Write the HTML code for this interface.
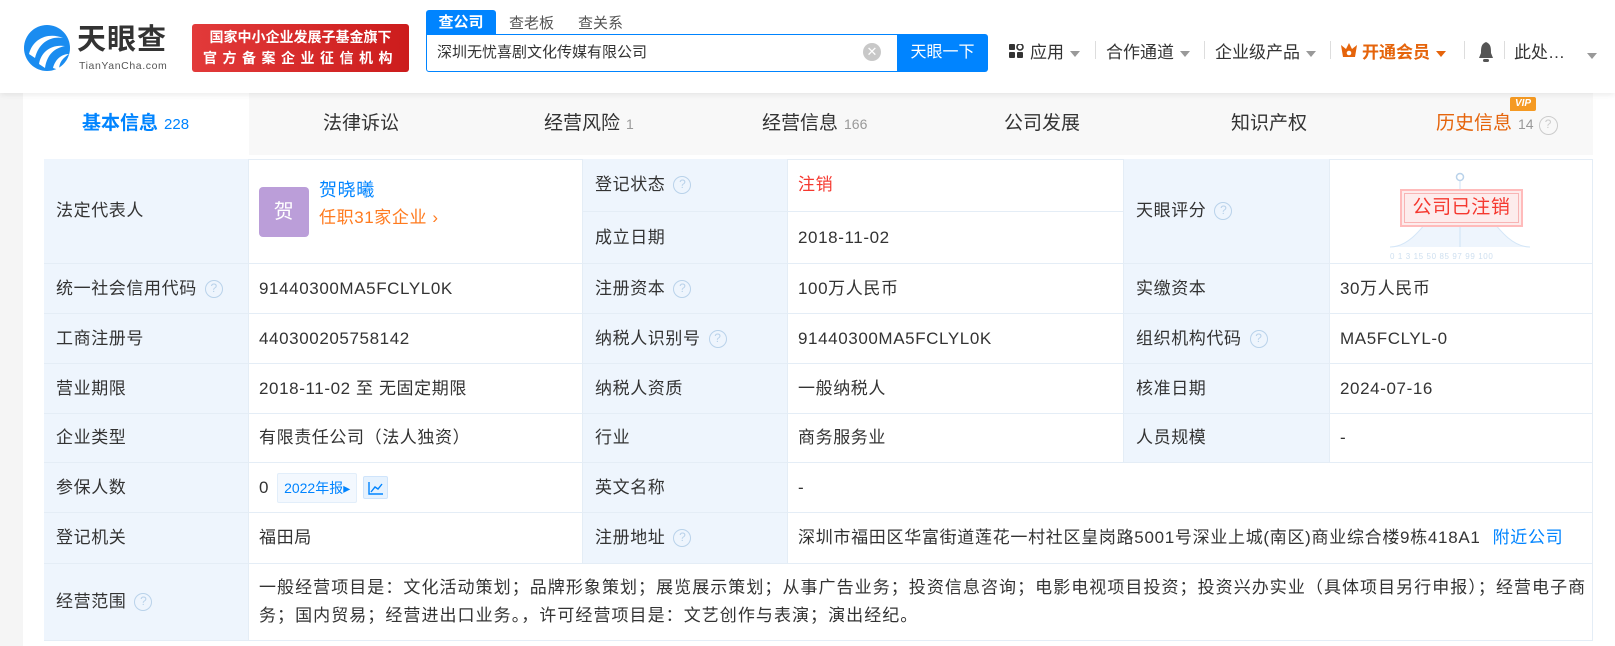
<!DOCTYPE html>
<html><head><meta charset="utf-8">
<style>
*{margin:0;padding:0;box-sizing:border-box}
body{width:1615px;height:646px;overflow:hidden;background:#fff;font-family:"Liberation Sans","Noto Sans CJK SC",sans-serif;color:#333;position:relative}
.a{position:absolute;white-space:nowrap}
.hdr{position:absolute;left:0;top:0;width:1615px;height:93px;background:#fff;box-shadow:0 2px 6px rgba(0,0,0,.08);z-index:3}
.nav{font-size:17px;color:#333;top:38px}
.tri{display:inline-block;width:0;height:0;border-left:5px solid transparent;border-right:5px solid transparent;border-top:6px solid #999;vertical-align:middle;margin-left:6px}
.sep{position:absolute;top:41px;width:1px;height:18px;background:#ddd}
.tabbar{position:absolute;left:23px;top:93px;width:1570px;height:62px;background:#f8f8f8}
.tab{position:absolute;top:108px;font-size:19px;color:#333}
.tab small{font-size:14px;color:#999;margin-left:6px}
.cell{position:absolute;border-right:1px solid #e4edf6;border-bottom:1px solid #e4edf6;font-size:17px;letter-spacing:.6px;line-height:22px;color:#333;display:flex;align-items:center;padding-left:12px;white-space:nowrap}
.lb{background:#eef5fd}
.vl{padding-left:10px}
.q{display:inline-block;width:18px;height:18px;border:1.5px solid #b9d2ea;border-radius:50%;color:#b9d2ea;font-size:12px;text-align:center;line-height:15px;margin-left:8px;letter-spacing:0}
</style></head><body>
<div style="position:absolute;left:0;top:93px;width:23px;height:553px;background:#f5f5f5"></div>
<div class="hdr">
 <svg class="a" style="left:23px;top:24px" width="48" height="48" viewBox="0 0 48 48">
  <circle cx="24" cy="24" r="23" fill="#1a8cf0"/>
  <path d="M6 30 C10 14 26 8 40 14 C28 12 16 18 12 34 Z" fill="#fff"/>
  <path d="M16 40 C18 28 28 20 42 22 C32 24 24 30 22 44 Z" fill="#fff"/>
  <path d="M30 44 C32 36 38 30 46 30 C40 34 36 38 36 46 Z" fill="#fff"/>
 </svg>
 <div class="a" style="left:77px;top:22px;font-size:29px;line-height:36px;font-weight:bold;color:#333;letter-spacing:1px">天眼查</div>
 <div class="a" style="left:79px;top:60px;font-size:10.5px;line-height:12px;color:#555;letter-spacing:.6px">TianYanCha.com</div>
 <div class="a" style="left:192px;top:24px;width:217px;height:48px;background:linear-gradient(90deg,#e23a3a,#cc1c1c);border-radius:3px;color:#fff;font-size:14px;text-align:center;line-height:21px;padding-top:3px;font-weight:bold">国家中小企业发展子基金旗下<br><span style="letter-spacing:5.5px">官方备案企业征信机构</span></div>
 <div class="a" style="left:426px;top:10px;width:70px;height:25px;background:#0084ff;color:#fff;font-size:15px;font-weight:bold;text-align:center;line-height:25px;border-radius:3px 3px 0 0">查公司</div>
 <div class="a" style="left:509px;top:12px;font-size:15px;color:#555">查老板</div>
 <div class="a" style="left:578px;top:12px;font-size:15px;color:#555">查关系</div>
 <div class="a" style="left:426px;top:34px;width:472px;height:38px;border:1px solid #0084ff;border-radius:0 0 0 3px;font-size:15px;line-height:35px;padding-left:10px;color:#333">深圳无忧喜剧文化传媒有限公司</div>
 <div class="a" style="left:863px;top:43px;width:18px;height:18px;border-radius:50%;background:#c8c8c8;color:#fff;font-size:13px;text-align:center;line-height:18px">✕</div>
 <div class="a" style="left:897px;top:34px;width:91px;height:38px;background:#0084ff;color:#fff;font-size:16px;text-align:center;line-height:38px;border-radius:0 3px 3px 0">天眼一下</div>
 <svg class="a" style="left:1009px;top:44px" width="15" height="15"><rect x="0" y="0" width="6" height="6" rx="1" fill="#333"/><rect x="8" y="0" width="6" height="6" rx="3" fill="none" stroke="#333" stroke-width="1.6"/><rect x="0" y="8" width="6" height="6" rx="1" fill="#333"/><rect x="8" y="8" width="6" height="6" rx="1" fill="#333"/></svg>
 <div class="a nav" style="left:1030px">应用<span class="tri"></span></div>
 <div class="sep" style="left:1095px"></div>
 <div class="a nav" style="left:1106px">合作通道<span class="tri"></span></div>
 <div class="sep" style="left:1204px"></div>
 <div class="a nav" style="left:1215px">企业级产品<span class="tri"></span></div>
 <div class="sep" style="left:1330px"></div>
 <svg class="a" style="left:1340px;top:42px" width="18" height="16"><path d="M1 3 L6 7 L9 1 L12 7 L17 3 L15 15 L3 15 Z" fill="#e5640b"/><circle cx="9" cy="11" r="2.3" fill="#fff"/></svg>
 <div class="a nav" style="left:1362px;color:#e5640b;font-weight:bold">开通会员<span class="tri" style="border-top-color:#e5640b"></span></div>
 <div class="sep" style="left:1464px"></div>
 <svg class="a" style="left:1477px;top:41px" width="18" height="22"><path d="M9 1 C4 3 4 7 4 12 L2 17 L16 17 L14 12 C14 7 14 3 9 1Z" fill="#555"/><rect x="6" y="18" width="6" height="3" rx="1.5" fill="#555"/></svg>
 <div class="sep" style="left:1504px"></div>
 <div class="a nav" style="left:1514px">此处…</div>
 <div class="a" style="left:1587px;top:47px"><span class="tri" style="margin:0"></span></div>
</div>
<div class="tabbar"></div>
<div class="a" style="left:23px;top:93px;width:226px;height:62px;background:#fff"></div>
<div class="tab" style="left:82px;color:#0084ff;font-weight:bold">基本信息<small style="color:#0084ff;font-weight:normal;font-size:15px">228</small></div>
<div class="tab" style="left:323px">法律诉讼</div>
<div class="tab" style="left:544px">经营风险<small>1</small></div>
<div class="tab" style="left:762px">经营信息<small>166</small></div>
<div class="tab" style="left:1004px">公司发展</div>
<div class="tab" style="left:1231px">知识产权</div>
<div class="tab" style="left:1436px;color:#e5640b">历史信息<small>14</small><span class="q" style="border-color:#ccc;color:#ccc;width:19px;height:19px;margin-left:5px;vertical-align:1px">?</span></div>
<div class="a" style="left:1510px;top:97px;width:26px;height:14px;background:#f59a23;color:#fff;font-size:10px;font-weight:bold;font-style:italic;text-align:center;line-height:14px;border-radius:2px 2px 2px 0">VIP</div>

<div class="a" style="left:44px;top:159px;width:1549px;height:482px;border-top:1px solid #e4edf6;border-left:1px solid #e4edf6"></div>
<div class="cell lb" style="left:44px;top:159px;width:205px;height:105px">法定代表人</div>
<div class="cell" style="left:249px;top:159px;width:334px;height:105px">
 <div class="a" style="left:10px;top:28px;width:50px;height:50px;background:#bb9ed9;border-radius:4px;color:#fff;font-size:20px;text-align:center;line-height:50px">贺</div>
 <div class="a" style="left:70px;top:20px;font-size:18px;color:#0084ff">贺晓曦</div>
 <div class="a" style="left:70px;top:48px;font-size:17px;color:#ff7a1e">任职31家企业 ›</div>
</div>
<div class="cell lb" style="left:583px;top:159px;width:205px;height:53px">登记状态<span class="q">?</span></div>
<div class="cell vl" style="left:788px;top:159px;width:336px;height:53px;color:#f5382f">注销</div>
<div class="cell lb" style="left:583px;top:212px;width:205px;height:52px">成立日期</div>
<div class="cell vl" style="left:788px;top:212px;width:336px;height:52px">2018-11-02</div>
<div class="cell lb" style="left:1124px;top:159px;width:206px;height:105px">天眼评分<span class="q">?</span></div>
<div class="cell" style="left:1330px;top:159px;width:263px;height:105px">
 <svg class="a" style="left:60px;top:10px" width="140" height="90" viewBox="0 0 140 90">
  <path d="M0 78 C30 78 45 30 70 22 C95 30 110 78 140 78" fill="#eef5fd" stroke="#d4e6f7"/>
  <line x1="70" y1="12" x2="70" y2="78" stroke="#cfe2f5"/>
  <circle cx="70" cy="8" r="3.5" fill="none" stroke="#b9d2ea" stroke-width="1.5"/>
  <text x="0" y="90" font-size="8" fill="#cfe0f0" font-family="Liberation Sans">0   1    3   15   50   85   97   99  100</text>
 </svg>
 <div class="a" style="left:70px;top:30px;width:123px;height:38px;background:#fdecec;border:2px solid #fbb;padding:2px"><div style="border:1px solid #f8b4b4;height:100%;color:#f5382f;font-size:19px;text-align:center;line-height:28px">公司已注销</div></div>
</div>
<div class="cell lb" style="left:44px;top:264px;width:205px;height:50px">统一社会信用代码<span class="q">?</span></div>
<div class="cell vl" style="left:249px;top:264px;width:334px;height:50px">91440300MA5FCLYL0K</div>
<div class="cell lb" style="left:583px;top:264px;width:205px;height:50px">注册资本<span class="q">?</span></div>
<div class="cell vl" style="left:788px;top:264px;width:336px;height:50px">100万人民币</div>
<div class="cell lb" style="left:1124px;top:264px;width:206px;height:50px">实缴资本</div>
<div class="cell vl" style="left:1330px;top:264px;width:263px;height:50px">30万人民币</div>

<div class="cell lb" style="left:44px;top:314px;width:205px;height:50px">工商注册号</div>
<div class="cell vl" style="left:249px;top:314px;width:334px;height:50px">440300205758142</div>
<div class="cell lb" style="left:583px;top:314px;width:205px;height:50px">纳税人识别号<span class="q">?</span></div>
<div class="cell vl" style="left:788px;top:314px;width:336px;height:50px">91440300MA5FCLYL0K</div>
<div class="cell lb" style="left:1124px;top:314px;width:206px;height:50px">组织机构代码<span class="q">?</span></div>
<div class="cell vl" style="left:1330px;top:314px;width:263px;height:50px">MA5FCLYL-0</div>

<div class="cell lb" style="left:44px;top:364px;width:205px;height:50px">营业期限</div>
<div class="cell vl" style="left:249px;top:364px;width:334px;height:50px">2018-11-02 至 无固定期限</div>
<div class="cell lb" style="left:583px;top:364px;width:205px;height:50px">纳税人资质</div>
<div class="cell vl" style="left:788px;top:364px;width:336px;height:50px">一般纳税人</div>
<div class="cell lb" style="left:1124px;top:364px;width:206px;height:50px">核准日期</div>
<div class="cell vl" style="left:1330px;top:364px;width:263px;height:50px">2024-07-16</div>

<div class="cell lb" style="left:44px;top:414px;width:205px;height:49px">企业类型</div>
<div class="cell vl" style="left:249px;top:414px;width:334px;height:49px">有限责任公司（法人独资）</div>
<div class="cell lb" style="left:583px;top:414px;width:205px;height:49px">行业</div>
<div class="cell vl" style="left:788px;top:414px;width:336px;height:49px">商务服务业</div>
<div class="cell lb" style="left:1124px;top:414px;width:206px;height:49px">人员规模</div>
<div class="cell vl" style="left:1330px;top:414px;width:263px;height:49px">-</div>

<div class="cell lb" style="left:44px;top:463px;width:205px;height:50px">参保人数</div>
<div class="cell vl" style="left:249px;top:463px;width:334px;height:50px">0<span style="margin-left:8px;background:#f3f8fe;border:1px solid #e2eefa;border-radius:2px;color:#0084ff;font-size:14px;letter-spacing:0;padding:3px 6px">2022年报▸</span><span style="margin-left:6px;width:25px;height:23px;background:#e6f2fe;border:1px solid #cfe4fb;border-radius:2px;display:inline-flex;align-items:center;justify-content:center"><svg width="16" height="14"><path d="M1 1 V13 H15 M3 11 L7 6 L10 8 L14 3" fill="none" stroke="#0084ff" stroke-width="1.4"/></svg></span></div>
<div class="cell lb" style="left:583px;top:463px;width:205px;height:50px">英文名称</div>
<div class="cell vl" style="left:788px;top:463px;width:805px;height:50px">-</div>

<div class="cell lb" style="left:44px;top:513px;width:205px;height:51px">登记机关</div>
<div class="cell vl" style="left:249px;top:513px;width:334px;height:51px">福田局</div>
<div class="cell lb" style="left:583px;top:513px;width:205px;height:51px">注册地址<span class="q">?</span></div>
<div class="cell vl" style="left:788px;top:513px;width:805px;height:51px;letter-spacing:.7px">深圳市福田区华富街道莲花一村社区皇岗路5001号深业上城(南区)商业综合楼9栋418A1<span style="color:#0084ff;margin-left:12px">附近公司</span></div>

<div class="cell lb" style="left:44px;top:564px;width:205px;height:77px">经营范围<span class="q">?</span></div>
<div class="cell vl" style="left:249px;top:564px;width:1344px;height:77px;line-height:28px;white-space:nowrap;letter-spacing:1.05px">一般经营项目是：文化活动策划；品牌形象策划；展览展示策划；从事广告业务；投资信息咨询；电影电视项目投资；投资兴办实业（具体项目另行申报）；经营电子商<br>务；国内贸易；经营进出口业务。，许可经营项目是：文艺创作与表演；演出经纪。</div>
</body></html>
